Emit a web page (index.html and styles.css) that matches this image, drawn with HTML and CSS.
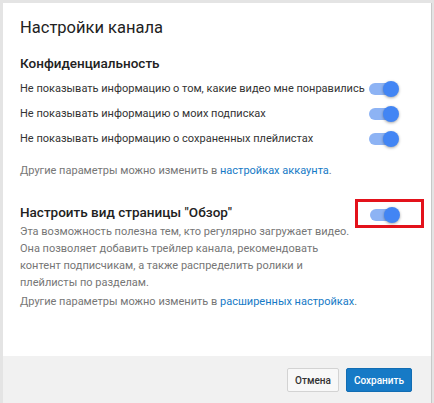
FILE: index.html
```html
<!DOCTYPE html>
<html>
<head>
  <title>Настройки канала</title>
  <meta charset="utf-8">
  <link rel="stylesheet" href="styles.css">
</head>
<body>
  <!-- Dialog -->
  <div class="dialog">
    <div class="dialog-body">
      <div class="dialog-title">Настройки канала</div>

      <!-- Privacy -->
      <div class="section-title">Конфиденциальность</div>
      <div class="option-list">
        <div class="option-row">
          <span>Не показывать информацию о том, какие видео мне понравились</span>
          <span class="toggle"></span>
        </div>
        <div class="option-row">
          <span>Не показывать информацию о моих подписках</span>
          <span class="toggle"></span>
        </div>
        <div class="option-row">
          <span>Не показывать информацию о сохраненных плейлистах</span>
          <span class="toggle"></span>
        </div>
      </div>
      <div class="note">Другие параметры можно изменить в <a href="#">настройках аккаунта</a>.</div>

      <!-- Browse view -->
      <div class="browse-head">
        <div class="section-title">Настроить вид страницы "Обзор"</div>
        <div class="highlight"><span class="toggle"></span></div>
      </div>
      <div class="description">
        Эта возможность полезна тем, кто регулярно загружает видео.<br>
        Она позволяет добавить трейлер канала, рекомендовать<br>
        контент подписчикам, а также распределить ролики и<br>
        плейлисты по разделам.
      </div>
      <div class="note note-last">Другие параметры можно изменить в <a href="#">расширенных настройках</a>.</div>
    </div>

    <!-- Footer -->
    <div class="dialog-footer">
      <button class="btn btn-cancel">Отмена</button>
      <button class="btn btn-save">Сохранить</button>
    </div>
  </div>
</body>
</html>
```

FILE: styles.css
```css
/* Base Styles */
:root {
  --text: #222;
  --muted: #767676;
  --link: #167ac6;
  --toggle: #4285f4;
}

* {
  box-sizing: border-box;
}

body, html {
  margin: 0;
  padding: 0;
  height: 100%;
  overflow: hidden;
  background: #e4e4e4;
  font-family: Roboto, 'Liberation Sans', Arial, sans-serif;
}

body {
  padding: 3px 2px 0 3px;
}

/* Dialog */
.dialog {
  width: 429px;
  height: 100%;
  background: #fff;
  border-right: 1px solid #c8c8c8;
  display: flex;
  flex-direction: column;
}

.dialog-body {
  padding: 15px 20px 0 17px;
  height: 353px;
}

.dialog-title {
  font-size: 16.5px;
  line-height: 20px;
  color: var(--text);
}

.section-title {
  font-size: 13.5px;
  font-weight: 500;
  line-height: 20px;
  color: var(--text);
  margin-top: 15px;
}

/* Option rows */
.option-list {
  margin-top: 3px;
}

.option-row {
  display: flex;
  justify-content: space-between;
  align-items: center;
  height: 25px;
  font-size: 11px;
  color: #333;
  white-space: nowrap;
}

.toggle {
  position: relative;
  display: inline-block;
  flex-shrink: 0;
  width: 30px;
  height: 16px;
  margin-right: 12px;
}

.toggle:before {
  content: "";
  position: absolute;
  left: 0;
  top: 2px;
  width: 26px;
  height: 12px;
  border-radius: 6px;
  background: #8db3f4;
}

.toggle:after {
  content: "";
  position: absolute;
  right: 0;
  top: 0;
  width: 16px;
  height: 16px;
  border-radius: 50%;
  background: var(--toggle);
  box-shadow: 0 1px 3px rgba(0, 0, 0, 0.35);
}

.note {
  font-size: 11px;
  line-height: 17px;
  color: var(--muted);
  margin-top: 11px;
}

.note a {
  color: var(--link);
  text-decoration: none;
}

.note-last {
  margin-top: 2px;
}

/* Browse section */
.browse-head {
  display: flex;
  justify-content: space-between;
  align-items: center;
  height: 20px;
  margin-top: 23px;
}

.browse-head .section-title {
  margin-top: 0;
}

.highlight {
  width: 69px;
  height: 29px;
  border: 3px solid #e3121b;
  display: flex;
  align-items: center;
  margin: 0 -13px -3px 0;
  padding: 3px 0 0 12px;
}

.highlight .toggle {
  margin-right: 0;
}

.description {
  font-size: 11px;
  line-height: 17px;
  color: var(--muted);
  margin-top: 1px;
}

/* Footer */
.dialog-footer {
  flex: 1;
  background: #f1f1f1;
  display: flex;
  justify-content: flex-end;
  align-items: flex-start;
  gap: 7px;
  padding: 12px 19px 0 0;
}

.btn {
  height: 24px;
  border-radius: 2px;
  font-family: Roboto, 'Liberation Sans', Arial, sans-serif;
  font-size: 10px;
  font-weight: 500;
  padding: 0;
  cursor: pointer;
}

.btn-cancel {
  width: 52px;
  background: #f8f8f8;
  border: 1px solid #d3d3d3;
  color: #333;
}

.btn-save {
  width: 66px;
  background: var(--link);
  border: 1px solid #126db3;
  color: #fff;
}
```
